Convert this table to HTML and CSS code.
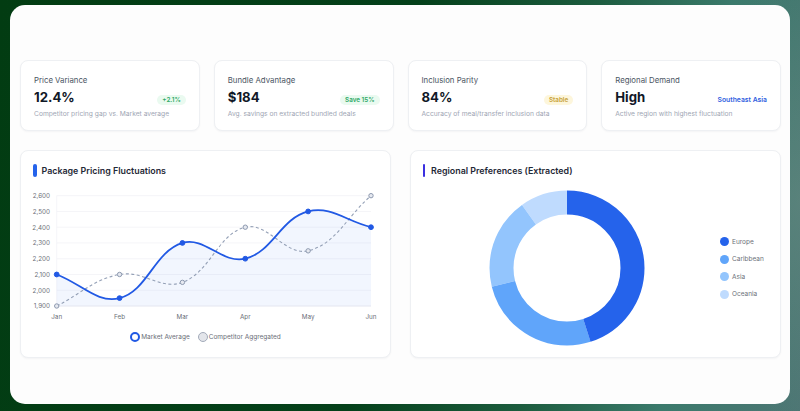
FILE: index.html
```html
<!DOCTYPE html>
<html lang="en">
<head>
<meta charset="utf-8">
<title>Package Pricing Dashboard</title>
<link rel="stylesheet" href="styles.css">
</head>
<body>
<div class="frame">
  <div class="kpis">
    <div class="kpi">
      <div class="kpi-label">Price Variance</div>
      <div class="kpi-row">
        <span class="kpi-value">12.4%</span>
        <span class="badge badge-green">+2.1%</span>
      </div>
      <div class="kpi-sub">Competitor pricing gap vs. Market average</div>
    </div>
    <div class="kpi">
      <div class="kpi-label">Bundle Advantage</div>
      <div class="kpi-row">
        <span class="kpi-value">$184</span>
        <span class="badge badge-green">Save 15%</span>
      </div>
      <div class="kpi-sub">Avg. savings on extracted bundled deals</div>
    </div>
    <div class="kpi">
      <div class="kpi-label">Inclusion Parity</div>
      <div class="kpi-row">
        <span class="kpi-value">84%</span>
        <span class="badge badge-yellow">Stable</span>
      </div>
      <div class="kpi-sub">Accuracy of meal/transfer inclusion data</div>
    </div>
    <div class="kpi">
      <div class="kpi-label">Regional Demand</div>
      <div class="kpi-row">
        <span class="kpi-value">High</span>
        <span class="badge badge-blue">Southeast Asia</span>
      </div>
      <div class="kpi-sub">Active region with highest fluctuation</div>
    </div>
  </div>

  <div class="charts">
    <div class="chart-card">
      <div class="chart-title"><span class="bar bar-blue"></span>Package Pricing Fluctuations</div>
      <svg class="line-chart" width="369" height="140" viewBox="0 0 369 140">
        <g class="grid">
          <line x1="35.7" y1="9.68" x2="350" y2="9.68"/>
          <line x1="35.7" y1="25.44" x2="350" y2="25.44"/>
          <line x1="35.7" y1="41.2" x2="350" y2="41.2"/>
          <line x1="35.7" y1="56.96" x2="350" y2="56.96"/>
          <line x1="35.7" y1="72.72" x2="350" y2="72.72"/>
          <line x1="35.7" y1="88.48" x2="350" y2="88.48"/>
          <line x1="35.7" y1="104.24" x2="350" y2="104.24"/>
          <line x1="35.7" y1="9.68" x2="35.7" y2="120"/>
        </g>
        <g class="ylabels">
          <text x="29" y="12">2,600</text>
          <text x="29" y="27.8">2,500</text>
          <text x="29" y="43.5">2,400</text>
          <text x="29" y="59.3">2,300</text>
          <text x="29" y="75">2,200</text>
          <text x="29" y="90.8">2,100</text>
          <text x="29" y="106.6">2,000</text>
          <text x="29" y="122.3">1,900</text>
        </g>
        <g class="xlabels">
          <text x="35.7" y="132.5">Jan</text>
          <text x="98.56" y="132.5">Feb</text>
          <text x="161.42" y="132.5">Mar</text>
          <text x="224.28" y="132.5">Apr</text>
          <text x="287.14" y="132.5">May</text>
          <text x="350" y="132.5">Jun</text>
        </g>
        <path class="area" d="M35.7 88.48 C60.84 97.94 76.16 117.74 98.56 112.12 C126.44 105.13 133.08 65.84 161.42 56.96 C183.37 50.08 201.56 78.42 224.28 72.72 C251.85 65.81 259.57 32.35 287.14 25.44 C309.86 19.74 324.86 34.9 350 41.2 L350 120 L35.7 120 Z"/>
        <line class="axis" x1="35.7" y1="120" x2="350" y2="120"/>
        <path class="comp-line" d="M35.7 120 C60.84 107.39 72.11 93.45 98.56 88.48 C122.40 84.00 139.75 104.51 161.42 96.36 C190.03 85.60 196.40 48.19 224.28 41.2 C246.68 35.58 264.74 70.46 287.14 64.84 C315.02 57.85 324.86 31.74 350 9.68"/>
        <path class="market-line" d="M35.7 88.48 C60.84 97.94 76.16 117.74 98.56 112.12 C126.44 105.13 133.08 65.84 161.42 56.96 C183.37 50.08 201.56 78.42 224.28 72.72 C251.85 65.81 259.57 32.35 287.14 25.44 C309.86 19.74 324.86 34.9 350 41.2"/>
        <g class="comp-pts">
          <circle cx="35.7" cy="120" r="2.2"/>
          <circle cx="98.56" cy="88.48" r="2.2"/>
          <circle cx="161.42" cy="96.36" r="2.2"/>
          <circle cx="224.28" cy="41.2" r="2.2"/>
          <circle cx="287.14" cy="64.84" r="2.2"/>
          <circle cx="350" cy="9.68" r="2.2"/>
        </g>
        <g class="market-pts">
          <circle cx="35.7" cy="88.48" r="2.4"/>
          <circle cx="98.56" cy="112.12" r="2.4"/>
          <circle cx="161.42" cy="56.96" r="2.4"/>
          <circle cx="224.28" cy="72.72" r="2.4"/>
          <circle cx="287.14" cy="25.44" r="2.4"/>
          <circle cx="350" cy="41.2" r="2.4"/>
        </g>
      </svg>
      <div class="line-legend">
        <span class="ll-item"><span class="ll-dot ll-market"></span>Market Average</span>
        <span class="ll-item"><span class="ll-dot ll-comp"></span>Competitor Aggregated</span>
      </div>
    </div>

    <div class="chart-card">
      <div class="chart-title"><span class="bar bar-indigo"></span>Regional Preferences (Extracted)</div>
      <div class="donut-body">
        <div class="donut-area">
          <svg class="donut" width="156" height="156" viewBox="0 0 156 156">
            <g transform="rotate(-90 78 78)">
              <circle cx="78" cy="78" r="65.5" class="seg" stroke="#bfdbfe" stroke-dasharray="41.2 411.55" stroke-dashoffset="-370.35"/>
              <circle cx="78" cy="78" r="65.5" class="seg" stroke="#93c5fd" stroke-dasharray="78.2 411.55" stroke-dashoffset="-292.15"/>
              <circle cx="78" cy="78" r="65.5" class="seg" stroke="#60a5fa" stroke-dasharray="107 411.55" stroke-dashoffset="-185.15"/>
              <circle cx="78" cy="78" r="65.5" class="seg" stroke="#2563eb" stroke-dasharray="185.2 411.55" stroke-dashoffset="0"/>
            </g>
          </svg>
        </div>
        <div class="donut-legend">
          <div class="dl-item"><span class="dl-dot dl-europe"></span>Europe</div>
          <div class="dl-item"><span class="dl-dot dl-carib"></span>Caribbean</div>
          <div class="dl-item"><span class="dl-dot dl-asia"></span>Asia</div>
          <div class="dl-item"><span class="dl-dot dl-oceania"></span>Oceania</div>
        </div>
      </div>
    </div>
  </div>
</div>
</body>
</html>
```

FILE: styles.css
```css
* { box-sizing: border-box; }
html, body { margin: 0; height: 100%; }
body {
  width: 800px;
  height: 411px;
  overflow: hidden;
  padding: 5px 10px 0 10px;
  font-family: Inter, "Noto Sans", "Liberation Sans", sans-serif;
  background:
    radial-gradient(ellipse 120px 220px at 800px 200px, rgba(120,150,140,0.35), rgba(0,0,0,0) 100%),
    linear-gradient(100deg, #023c12 0%, #04401a 48%, #1c5c3e 68%, #3b7a6c 84%, #4d7674 100%);
}
.frame {
  width: 780px;
  height: 399px;
  background: #fdfdfd;
  border-radius: 15px;
  padding: 55px 9px 0 10px;
}
.kpis {
  display: grid;
  grid-template-columns: repeat(4, 1fr);
  gap: 14px;
}
.kpi {
  height: 71px;
  background: #fff;
  border: 1px solid #eef0f3;
  border-radius: 8px;
  box-shadow: 0 1px 2px rgba(16,24,40,0.04);
  padding: 13px 13px 0 13px;
}
.kpi-label {
  font-size: 7.8px;
  line-height: 12px;
  color: #4b5563;
}
.kpi-row {
  display: flex;
  justify-content: space-between;
  align-items: baseline;
  margin-top: 2px;
  height: 18px;
}
.kpi-value {
  font-size: 13.2px;
  line-height: 18px;
  font-weight: 700;
  color: #111827;
}
.badge {
  font-size: 6.3px;
  line-height: 10px;
  font-weight: 600;
  padding: 0 5px;
  border-radius: 6px;
}
.badge-green { background: #eafaf0; color: #2fa866; }
.badge-yellow { background: #fdf6dc; color: #c7a23a; }
.badge-blue { color: #2f5ee0; padding: 0; font-size: 6.8px; }
.kpi-sub {
  margin-top: 3px;
  font-size: 6.7px;
  line-height: 10px;
  color: #a0a6b4;
}
.charts {
  display: grid;
  grid-template-columns: 1fr 1fr;
  gap: 19px;
  margin-top: 19px;
}
.chart-card {
  height: 208px;
  background: #fff;
  border: 1px solid #eef0f3;
  border-radius: 8px;
  box-shadow: 0 1px 2px rgba(16,24,40,0.04);
}
.chart-title {
  height: 35px;
  display: flex;
  align-items: center;
  padding: 3px 0 0 12px;
  font-size: 8.9px;
  font-weight: 600;
  color: #1f2937;
}
.bar {
  display: inline-block;
  height: 13px;
  border-radius: 2px;
  margin-right: 5px;
}
.bar-blue { width: 3.5px; background: #2563eb; }
.bar-indigo { width: 2px; background: #3b30e0; margin-right: 6px; }
.line-chart { display: block; }
.grid line { stroke: #f2f3f6; stroke-width: 0.8; }
.axis { stroke: #e4e6f0; stroke-width: 1.2; }
.ylabels text {
  font-size: 6.3px;
  fill: #6b6f78;
  text-anchor: end;
}
.xlabels text {
  font-size: 6.3px;
  fill: #6b6f78;
  text-anchor: middle;
}
.area { fill: rgba(37,99,235,0.06); }
.market-line { fill: none; stroke: #2159e4; stroke-width: 1.8; }
.comp-line { fill: none; stroke: #94a0b6; stroke-width: 1.1; stroke-dasharray: 3 2.5; }
.comp-pts circle { fill: #e6e9f0; stroke: #8e9ab0; stroke-width: 1; }
.market-pts circle { fill: #2159e4; stroke: #2159e4; stroke-width: 1; }
.line-legend {
  display: flex;
  justify-content: center;
  gap: 8px;
  margin-top: 6px;
  font-size: 6.5px;
  color: #6b6f78;
}
.ll-item { display: flex; align-items: center; }
.ll-dot {
  width: 10px;
  height: 10px;
  border-radius: 50%;
  margin-right: 1px;
}
.ll-market { border: 2px solid #2159e4; background: #fff; }
.ll-comp { border: 1.5px solid #a3abba; background: #e3e5ea; }
.donut-body {
  display: flex;
  align-items: center;
  padding: 4px 10px 0 10px;
}
.donut-area {
  flex: 1;
  display: flex;
  justify-content: center;
}
.donut { display: block; }
.seg { fill: none; stroke-width: 24; }
.donut-legend {
  width: 58px;
  padding-left: 8px;
  display: flex;
  flex-direction: column;
}
.dl-item {
  height: 17.6px;
  display: flex;
  align-items: center;
  font-size: 6.5px;
  color: #6b6f78;
}
.dl-dot {
  width: 9px;
  height: 9px;
  border-radius: 50%;
  margin-right: 3px;
}
.dl-europe { background: #2563eb; }
.dl-carib { background: #60a5fa; }
.dl-asia { background: #93c5fd; }
.dl-oceania { background: #bfdbfe; }
```
